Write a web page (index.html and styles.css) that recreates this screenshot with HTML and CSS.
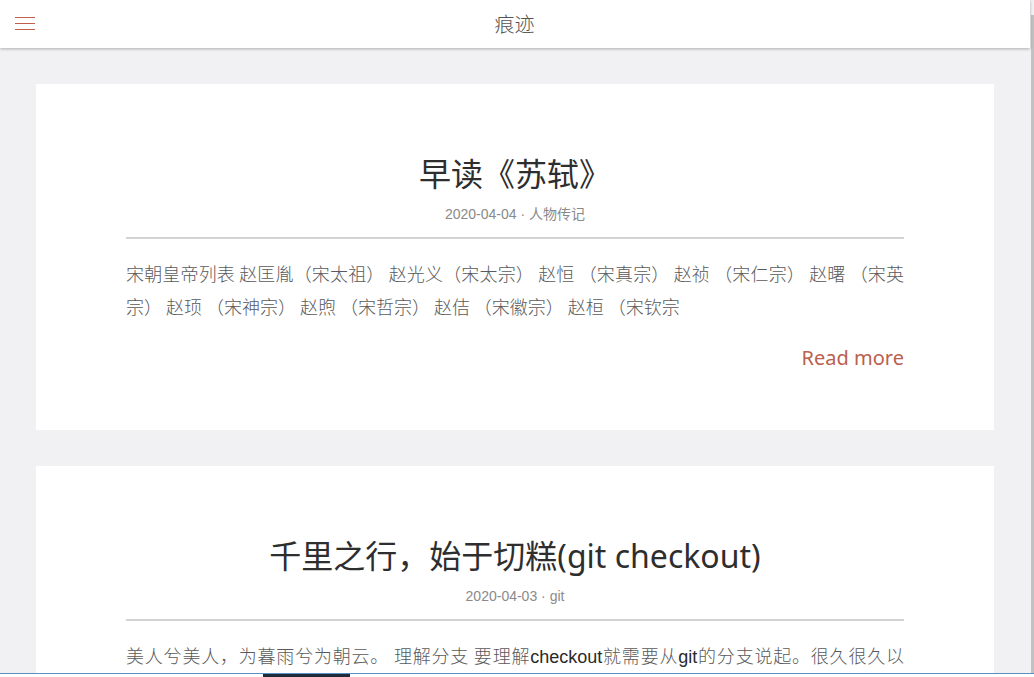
FILE: index.html
```html
<!DOCTYPE html>
<html lang="zh-CN">
<head>
<meta charset="utf-8">
<title>痕迹</title>
<link rel="stylesheet" href="styles.css">
</head>
<body>
<div class="page">
  <header class="topbar">
    <button class="menu-btn" aria-label="menu">
      <svg width="20" height="14" viewBox="0 0 20 14"><path d="M0 1.5H20M0 7.5H20M0 13.5H20" stroke="#c0604c" stroke-width="1"/></svg>
    </button>
    <div class="site-title">痕迹</div>
  </header>
  <main class="posts">
    <article class="card">
      <h1 class="post-title">早读《苏轼》</h1>
      <div class="post-meta">2020-04-04 · 人物传记</div>
      <hr class="divider">
      <p class="excerpt">宋朝皇帝列表 赵匡胤（宋太祖） 赵光义（宋太宗） 赵恒 （宋真宗） 赵祯 （宋仁宗） 赵曙 （宋英宗） 赵顼 （宋神宗） 赵煦 （宋哲宗） 赵佶 （宋徽宗） 赵桓 （宋钦宗</p>
      <div class="more-row"><a class="read-more" href="#">Read more</a></div>
    </article>
    <article class="card">
      <h1 class="post-title">千里之行，始于切糕(git checkout)</h1>
      <div class="post-meta">2020-04-03 · git</div>
      <hr class="divider">
      <p class="excerpt">美人兮美人，为暮雨兮为朝云。 理解分支 要理解<span class="latin">checkout</span>就需要从<span class="latin">git</span>的分支说起。很久很久以前，有一个仓库，仓库里有一个分支，分支上有许多次提交，每一次提交都记录着当时的快照。</p>
      <div class="more-row"><a class="read-more" href="#">Read more</a></div>
    </article>
  </main>
</div>
<div class="scrolltrack"><div class="scrollthumb"></div></div>
<div class="screen-edge"><span class="edge-seg"></span></div>
</body>
</html>
```
FILE: styles.css
```css
html {
  background: #f1f1f3;
}
body {
  margin: 0;
  background: #f1f1f3;
  font-family: "Liberation Sans", "Noto Sans CJK SC", sans-serif;
  color: #333;
  display: flex;
  align-items: flex-start;
}
.page {
  flex: 1;
  min-width: 0;
}
.scrolltrack {
  position: sticky;
  top: 0;
  width: 4px;
  height: 100vh;
  flex: none;
  background: #f1f1f3;
  padding-top: 15px;
  box-sizing: border-box;
}
.scrollthumb {
  height: 100%;
  margin-left: 1px;
  width: 3px;
  background: #c1c1c1;
}
.topbar {
  position: sticky;
  top: 0;
  z-index: 5;
  height: 48px;
  background: #fff;
  box-shadow: 0 1px 3px rgba(0, 0, 0, 0.28);
  display: flex;
  align-items: center;
  justify-content: center;
}
.menu-btn {
  position: absolute;
  left: 15px;
  top: 16px;
  padding: 0;
  border: 0;
  background: none;
  width: 20px;
  height: 14px;
  display: block;
}
.menu-btn svg {
  display: block;
}
.site-title {
  font-family: "Noto Sans CJK SC", sans-serif;
  font-size: 20px;
  font-weight: 300;
  color: #555;
  line-height: 48px;
  padding-right: 1px;
}
.posts {
  padding: 36px 36px 40px;
  display: flex;
  flex-direction: column;
  gap: 36px;
}
.card {
  background: #fff;
  padding: 66px 90px 58px;
}
.post-title {
  margin: 0;
  font-family: "Noto Sans", "Noto Sans CJK SC", sans-serif;
  font-weight: 400;
  font-size: 32px;
  line-height: 48px;
  text-align: center;
  color: #2e2e2e;
}
.post-meta {
  margin-top: 6px;
  font-size: 14px;
  line-height: 20px;
  text-align: center;
  color: #8a8a8a;
}
.divider {
  margin: 13px 0 0;
  border: 0;
  height: 2px;
  background: #d3d3d3;
}
.excerpt {
  margin: 18px 0 0;
  font-family: "Noto Sans CJK SC", sans-serif;
  font-weight: 300;
  font-size: 18px;
  line-height: 33px;
  text-align: justify;
  color: #5a5a5a;
}
.excerpt .latin {
  font-family: "Liberation Sans", sans-serif;
  font-weight: 400;
  color: #2a2a2a;
}
.more-row {
  margin-top: 21px;
  display: flex;
  justify-content: flex-end;
}
.read-more {
  font-family: "Noto Sans", "Open Sans", sans-serif;
  font-size: 20px;
  line-height: 28px;
  color: #b9604e;
  text-decoration: none;
}
.screen-edge {
  position: fixed;
  left: 0;
  right: 0;
  bottom: 0;
  height: 3px;
  background: #fff;
  border-top: 1px solid #5b8fc4;
  z-index: 10;
}
.edge-seg {
  position: absolute;
  left: 263px;
  top: 0;
  width: 87px;
  height: 3px;
  background: #1e2a38;
}
```
